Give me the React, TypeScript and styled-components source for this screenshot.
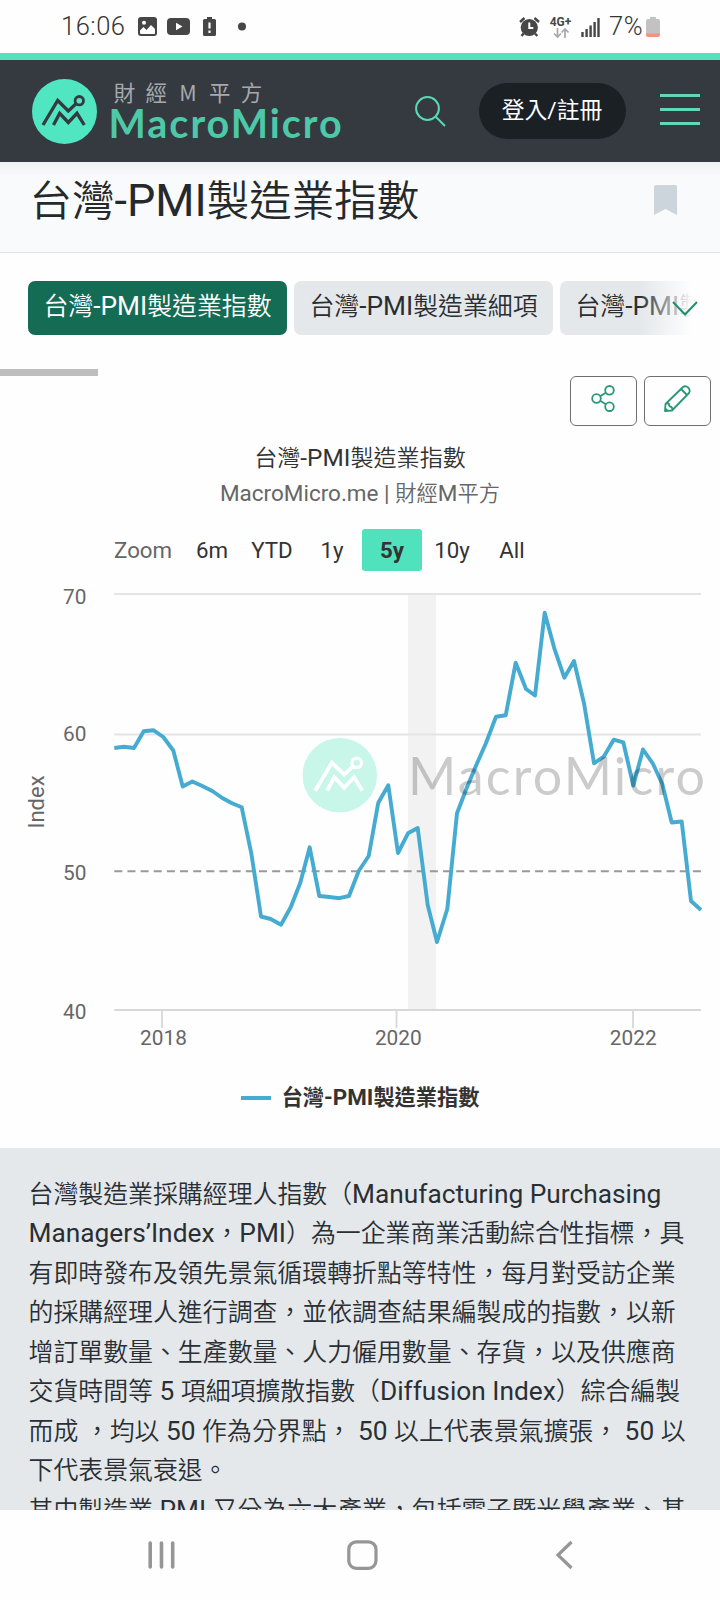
import React from 'react';
import styled, { createGlobalStyle } from 'styled-components';

const GlobalStyle = createGlobalStyle`
  * { box-sizing: border-box; }
  html, body { margin: 0; background: #fefefe; }
  body { font-family: Roboto, 'Noto Sans CJK TC DemiLight', 'Noto Sans CJK TC', sans-serif; color: #25292c; }
  svg { display: block; flex: none; }
`;

const Screen = styled.div`
  width: 720px;
  height: 1600px;
  overflow: hidden;
  display: flex;
  flex-direction: column;
  background: #fefefe;
`;

const StatusBar = styled.div`
  height: 53px;
  flex: none;
  display: flex;
  align-items: center;
  padding: 0 60px 0 61px;
  color: #464646;
`;

const StatusText = styled.span<{ $width: number }>`
  width: ${(p) => p.$width}px;
  font-size: 25.5px;
  font-weight: 300;
  letter-spacing: 0.5px;
  line-height: 51px;
  white-space: nowrap;
  color: #333;
`;

const StatusIcons = styled.div<{ $gap: number }>`
  display: flex;
  align-items: center;
  gap: ${(p) => p.$gap}px;
`;

const Spacer = styled.div`
  flex: 1;
`;

const Network = styled.div`
  display: flex;
  flex-direction: column;
  align-items: center;
  font: 700 12px/11px Roboto, sans-serif;
  width: 23px;
  margin-top: 1px;
`;

const Header = styled.header`
  height: 109px;
  flex: none;
  border-top: 7px solid #54e2bd;
  background: #353a40;
  display: flex;
  align-items: center;
  padding: 0 20px 0 31.5px;
`;

const Brand = styled.div`
  display: flex;
  align-items: center;
  gap: 12px;
  width: 383px;
`;

const BrandText = styled.div`
  display: flex;
  flex-direction: column;
  padding-bottom: 5px;
`;

const BrandChinese = styled.div`
  display: grid;
  grid-template-columns: repeat(5, 31.8px);
  justify-items: center;
  color: #a6aaae;
  font: 400 21.5px/27px 'Noto Sans CJK TC', sans-serif;
`;

const BrandLatin = styled.div`
  font: 700 39.5px/35px Lato, sans-serif;
  color: #4dc9a7;
  letter-spacing: 2px;
  white-space: nowrap;
`;

const LoginButton = styled.button`
  width: 147px;
  height: 56px;
  margin-left: 33px;
  border: 0;
  border-radius: 28px;
  background: #1b2024;
  color: #fff;
  font: 400 22.8px/56px Roboto, 'Noto Sans CJK TC', sans-serif;
  padding: 0;
`;

const Burger = styled.div`
  display: flex;
  flex-direction: column;
  gap: 11px;
  margin-left: 34px;
  margin-top: -3px;
`;

const BurgerLine = styled.span`
  width: 40px;
  height: 3px;
  background: #62d6b9;
`;

const TitleBar = styled.section`
  height: 91px;
  flex: none;
  display: flex;
  justify-content: space-between;
  padding: 0 43px 0 29.5px;
  border-bottom: 1px solid #dfe1e3;
  background: linear-gradient(#eef1f3 0, #f8fafc 14px, #f9fafc 100%);
`;

const PageTitle = styled.h1`
  margin: 0;
  padding-top: 2px;
  font-size: 42.5px;
  font-weight: 400;
  line-height: 76px;
  white-space: nowrap;
`;

const BookmarkSlot = styled.div`
  padding-top: 23px;
`;

const TabArea = styled.div`
  position: relative;
  flex: none;
`;

const TabStrip = styled.nav`
  display: flex;
  gap: 7px;
  height: 116px;
  width: 694px;
  padding: 28px 0 0 28px;
  overflow: hidden;
`;

const Tab = styled.a<{ $active?: boolean }>`
  flex: none;
  width: 259px;
  height: 54px;
  border-radius: 7px;
  text-align: center;
  font-size: 24.9px;
  line-height: 52px;
  white-space: nowrap;
  background: ${(p) => (p.$active ? '#146c54' : '#e4e8eb')};
  color: ${(p) => (p.$active ? '#fff' : '#2a2e32')};
`;

const TabFade = styled.div`
  position: absolute;
  top: 20px;
  right: 20px;
  width: 76px;
  height: 70px;
  display: flex;
  align-items: center;
  justify-content: flex-end;
  padding: 1px 2px 0 0;
  background: linear-gradient(90deg, rgba(254, 254, 254, 0) 20%, #fefefe 90%);
`;

const ScrollThumb = styled.div`
  width: 98px;
  height: 7px;
  flex: none;
  background: #bebebe;
`;

const Tools = styled.div`
  display: flex;
  flex: none;
  justify-content: flex-end;
  gap: 7px;
  padding-right: 9px;
`;

const ToolButton = styled.button`
  width: 67px;
  height: 50px;
  border: 1px solid #6d7073;
  border-radius: 6px;
  background: #fefefe;
  display: flex;
  justify-content: center;
  padding: 8px 0 0;
`;

const ChartTitle = styled.h2`
  margin: 13px 0 0;
  flex: none;
  text-align: center;
  font-size: 23.1px;
  font-weight: 400;
  line-height: 40px;
  color: #333;
`;

const ChartSubtitle = styled.div`
  flex: none;
  text-align: center;
  font-size: 21.3px;
  line-height: 30px;
  color: #666;
`;

const RangeRow = styled.div`
  display: flex;
  flex: none;
  align-items: flex-start;
  margin-top: 20px;
  padding-left: 114px;
  font-size: 22.3px;
  line-height: 43px;
  height: 42px;
  color: #666;
`;

const RangeLabel = styled.span`
  width: 68px;
`;

const RangeButton = styled.span<{ $active?: boolean }>`
  width: 60px;
  height: 41.5px;
  border-radius: 3px;
  text-align: center;
  color: #333;
  font-weight: ${(p) => (p.$active ? 700 : 400)};
  background: ${(p) => (p.$active ? '#4fe2bd' : 'transparent')};
`;

const Legend = styled.div`
  display: flex;
  flex: none;
  align-items: center;
  justify-content: center;
  gap: 11px;
  height: 78px;
  margin-bottom: 11px;
  color: #333;
`;

const LegendText = styled.span`
  font: 700 21.2px/30px Roboto, 'Noto Sans CJK TC', sans-serif;
`;

const LegendLine = styled.span`
  width: 30px;
  height: 4px;
  background: #47acd1;
`;

const Description = styled.section`
  height: 362px;
  flex: none;
  overflow: hidden;
  background: #e4e8eb;
  padding: 27px 0 0 28.5px;
`;

const Line = styled.p`
  margin: 0;
  font-size: 24.9px;
  line-height: 39.45px;
  white-space: pre;
  color: #2a2f33;
`;

const Latin = styled.span`
  font-family: Roboto, sans-serif;
  font-size: 1.056em;
  line-height: 0;
`;

const NavBar = styled.footer`
  height: 90px;
  flex: none;
  display: flex;
  align-items: center;
  padding: 0 147px;
`;

const NavIcon = styled.div<{ $gap?: number }>`
  margin-left: ${(p) => p.$gap ?? 0}px;
`;

const Mixed = ({ text }: { text: string }) => (
  <>
    {text.split(/([\x20-\x7e’]+)/).map((part, i) => (i % 2 ? <Latin key={i}>{part}</Latin> : part))}
  </>
);

const months: [number, number][] = [
  [114.3, 748], [124, 746.7], [134, 748], [143.7, 731.3], [153.3, 730.2], [163.3, 737], [173.3, 750.5],
  [182.7, 786.5], [192.3, 781.5], [202.3, 786], [212.3, 791], [222.3, 798], [232, 803.3], [241.7, 807.3],
  [251.3, 853.3], [261, 916.5], [270.7, 919], [281, 924.7], [290.7, 907.3], [300.3, 882.7], [309.7, 847.3],
  [319.3, 896], [329.3, 897], [339.3, 898.2], [349, 896], [358.7, 871], [368.7, 856], [378.3, 802.7],
  [388.3, 785.3], [398, 853], [408, 833.3], [417.7, 828], [427.7, 905], [437, 942], [447.3, 909],
  [457, 813.3], [466.7, 788], [476.3, 765], [486, 743], [496, 716.7], [505.7, 715.3], [515.7, 662.7],
  [526, 689], [535, 695.5], [544.7, 612.7], [554.3, 648.3], [564.3, 677.7], [574, 661], [584, 703.3],
  [594, 763.3], [603.7, 756.7], [613.7, 739.7], [623.3, 742.3], [633.3, 785.5], [643, 749.5],
  [652.7, 763.3], [662.3, 784], [671.7, 822.5], [681.7, 821.5], [691, 901], [701, 910],
];

const yLabels: [string, number][] = [['70', 604], ['60', 741], ['50', 880], ['40', 1019]];
const years: [string, number][] = [['2018', 163.5], ['2020', 398.3], ['2022', 633.2]];
const ranges = ['6m', 'YTD', '1y', '5y', '10y', 'All'];
const paragraph = [
  '台灣製造業採購經理人指數（Manufacturing Purchasing',
  'Managers’Index，PMI）為一企業商業活動綜合性指標，具',
  '有即時發布及領先景氣循環轉折點等特性，每月對受訪企業',
  '的採購經理人進行調查，並依調查結果編製成的指數，以新',
  '增訂單數量、生產數量、人力僱用數量、存貨，以及供應商',
  '交貨時間等 5 項細項擴散指數（Diffusion Index）綜合編製',
  '而成 ，均以 50 作為分界點， 50 以上代表景氣擴張， 50 以',
  '下代表景氣衰退。',
  '其中製造業 PMI 又分為六大產業，包括電子暨光學產業、基',
];

const Mark = ({ disc, stroke }: { disc: string; stroke: string }) => (
  <>
    <circle cx="32.5" cy="32.5" r="32.5" fill={disc} />
    <g fill="none" stroke={stroke} strokeWidth="3.3">
      <path d="M11 46 25.700 21.500 36.300 32 44 24.800" />
      <path d="M21.500 46 27.700 34.300 36.300 43.500 45 34.300 52.300 46" />
      <circle cx="47.3" cy="21.7" r="4.2" strokeWidth="2.8" />
    </g>
  </>
);

const Chart = () => (
  <svg width="720" height="488" viewBox="0 571 720 488" fontFamily="Roboto, sans-serif" fontSize="20.8" fill="#666">
    <rect x="408" y="595" width="28" height="415" fill="#f2f2f2" />
    <path d="M114.3 594H701M114.3 734.6H701" stroke="#e4e4e4" strokeWidth="2" />
    <path d="M114.3 1010H701M162 1010v18M396.5 1010v18M633 1010v18" stroke="#d8d8d8" strokeWidth="1.8" />
    <path d="M114.3 871.3H701" stroke="#999" strokeWidth="1.9" strokeDasharray="8 5.15" />
    <polyline points={months.map((p) => p.join(',')).join(' ')} fill="none" stroke="#46abd0" strokeWidth="3.9" strokeLinejoin="round" />
    <svg x="302.5" y="738" width="74.5" height="74.5" viewBox="0 0 65 65">
      <Mark disc="#c8f7ea" stroke="#fff" />
    </svg>
    <text x="408" y="795" fontFamily="Lato, sans-serif" fontSize="52" fill="#000" fillOpacity="0.2" textLength="297">MacroMicro</text>
    {yLabels.map(([t, y]) => <text key={t} x="86.5" y={y} textAnchor="end">{t}</text>)}
    {years.map(([t, x]) => <text key={t} x={x} y="1045" textAnchor="middle">{t}</text>)}
    <text transform="translate(44 802) rotate(-90)" textAnchor="middle" fontSize="22">Index</text>
  </svg>
);

export default function App() {
  return (
    <Screen lang="zh-TW">
      <GlobalStyle />
      <StatusBar>
        <StatusText $width={77}>16:06</StatusText>
        <StatusIcons $gap={10}>
          <svg width="19" height="19" viewBox="0 0 19 19">
            <rect width="19" height="19" rx="3" fill="#464646" />
            <circle cx="6" cy="5.8" r="2" fill="#fff" />
            <path d="M2 15.5V13.5L5.5 10l3 3L13 8l4 4v4.2q0 .8-.8.8H3.2q-1.2 0-1.2-1.5Z" fill="#fff" />
          </svg>
          <svg width="23" height="17" viewBox="0 0 23 17">
            <rect width="23" height="17" rx="4" fill="#464646" />
            <path d="M9 4.8 15.5 8.5 9 12.2Z" fill="#fff" />
          </svg>
          <svg width="16" height="20" viewBox="-3 0 16 20">
            <path d="M4 0h5v2h2.500q1.500 0 1.500 1.500v14q0 1.500-1.500 1.500h-10q-1.500 0-1.500-1.500v-14q0-1.500 1.500-1.500h2.500Z" fill="#464646" />
            <path d="M6.500 5.500v6M6.500 13.500v2.500" stroke="#fff" strokeWidth="2.2" />
          </svg>
          <svg width="30" height="9" viewBox="0 0 30 9"><circle cx="16" cy="4.5" r="4" fill="#464646" /></svg>
        </StatusIcons>
        <Spacer />
        <StatusIcons $gap={9}>
          <svg width="21" height="20" viewBox="0 0 21 20">
            <circle cx="10.3" cy="10.5" r="8.6" fill="#464646" />
            <path d="M1 5 5.500 1M15.500 1 20 5M4.500 16.500 2.500 19M16 16.500 18.300 19" stroke="#464646" strokeWidth="2.4" fill="none" />
            <path d="M10.300 5.500v5.500h4" stroke="#fff" strokeWidth="2" fill="none" />
          </svg>
          <Network>
            4G+
            <svg width="16" height="10" viewBox="0 0 16 10" fill="none" stroke="#a8a8a8" strokeWidth="1.7">
              <path d="M4.500 0v9M1 5.500 4.500 9 8 5.500M12 10V1M8.500 4.500 12 1l3.500 3.500" />
            </svg>
          </Network>
          <svg width="19" height="20" viewBox="0 0 19 20" stroke="#464646" strokeWidth="2.4">
            <path d="M1.500 20v-5M5.600 20V12M9.600 20V8.500M13.600 20V5M17.500 20V1" />
          </svg>
          <StatusText $width={37}>7%</StatusText>
        </StatusIcons>
        <svg width="14" height="20" viewBox="0 0 14 20">
          <path d="M4 0h6v2h2q2 0 2 2v12.500H0V4q0-2 2-2h2Z" fill="#c2c2c2" />
          <path d="M0 16.300h14v1.700q0 2-2 2H2q-2 0-2-2Z" fill="#f2947c" />
        </svg>
      </StatusBar>

      <Header>
        <Brand>
          <svg width="65" height="65" viewBox="0 0 65 65"><Mark disc="#50e6c1" stroke="#353a40" /></svg>
          <BrandText>
            <BrandChinese>
              <span>財</span><span>經</span><span>M</span><span>平</span><span>方</span>
            </BrandChinese>
            <BrandLatin>MacroMicro</BrandLatin>
          </BrandText>
        </Brand>
        <svg width="31" height="31" viewBox="0 0 31 31" fill="none" stroke="#5ad8b8" strokeWidth="2">
          <circle cx="12.5" cy="12.5" r="11.4" /><path d="M20.500 20.500 30 30" />
        </svg>
        <LoginButton>登入/註冊</LoginButton>
        <Burger><BurgerLine /><BurgerLine /><BurgerLine /></Burger>
      </Header>

      <TitleBar>
        <PageTitle><Mixed text="台灣-PMI製造業指數" /></PageTitle>
        <BookmarkSlot>
          <svg width="23" height="30" viewBox="0 0 23 30"><path d="M2 0h19q2 0 2 2v28l-11.500-6L0 30V2q0-2 2-2Z" fill="#ccd4dc" /></svg>
        </BookmarkSlot>
      </TitleBar>

      <TabArea>
        <TabStrip>
          <Tab $active><Mixed text="台灣-PMI製造業指數" /></Tab>
          <Tab><Mixed text="台灣-PMI製造業細項" /></Tab>
          <Tab><Mixed text="台灣-PMI製造業指數" /></Tab>
        </TabStrip>
        <TabFade>
          <svg width="26" height="15" viewBox="0 0 26 15" fill="none" stroke="#1f8f70" strokeWidth="2"><path d="M1 1 13 13.500 25 1" /></svg>
        </TabFade>
      </TabArea>
      <ScrollThumb />

      <Tools>
        <ToolButton aria-label="share">
          <svg width="26" height="27" viewBox="0 0 26 27" fill="none" stroke="#2a9878" strokeWidth="1.8">
            <circle cx="5.5" cy="13.5" r="4.3" /><circle cx="18.5" cy="5.3" r="4.3" /><circle cx="18.5" cy="21.7" r="4.3" />
            <path d="M9.200 11.200 14.800 7.700M9.200 15.800 14.800 19.300" />
          </svg>
        </ToolButton>
        <ToolButton aria-label="edit">
          <svg width="27" height="27" viewBox="0 0 27 27" fill="none" stroke="#2a9878" strokeWidth="1.8" strokeLinejoin="round">
            <path d="M1 26 1.500 19 19 2Q21.500.200 24.300 2.700 26.700 5.500 25 8L8 25.500ZM17 4 23 10M1.500 19Q3.500 17.500 5 19 4.800 21.500 7.300 22 9 23.500 8 25.500M1 26 3 24" />
          </svg>
        </ToolButton>
      </Tools>

      <ChartTitle><Mixed text="台灣-PMI製造業指數" /></ChartTitle>
      <ChartSubtitle><Mixed text="MacroMicro.me | 財經M平方" /></ChartSubtitle>
      <RangeRow>
        <RangeLabel>Zoom</RangeLabel>
        {ranges.map((r) => <RangeButton key={r} $active={r === '5y'}>{r}</RangeButton>)}
      </RangeRow>
      <Chart />
      <Legend><LegendLine /><LegendText><Mixed text="台灣-PMI製造業指數" /></LegendText></Legend>

      <Description>
        {paragraph.map((line) => <Line key={line}><Mixed text={line} /></Line>)}
      </Description>

      <NavBar>
        <svg width="28" height="30" viewBox="0 0 28 30" stroke="#969696" strokeWidth="3.6" strokeLinecap="round"><path d="M3.200 3v24M14.500 3v24M25.700 3v24" /></svg>
        <NavIcon $gap={172}>
          <svg width="31" height="30" viewBox="0 0 31 30" fill="none" stroke="#969696" strokeWidth="3.2"><rect x="1.8" y="1.8" width="27.2" height="26.5" rx="7.5" /></svg>
        </NavIcon>
        <NavIcon $gap={177}>
          <svg width="18" height="30" viewBox="0 0 18 30" fill="none" stroke="#969696" strokeWidth="3.2"><path d="M16.500 2 3 15 16.500 28" /></svg>
        </NavIcon>
      </NavBar>
    </Screen>
  );
}
